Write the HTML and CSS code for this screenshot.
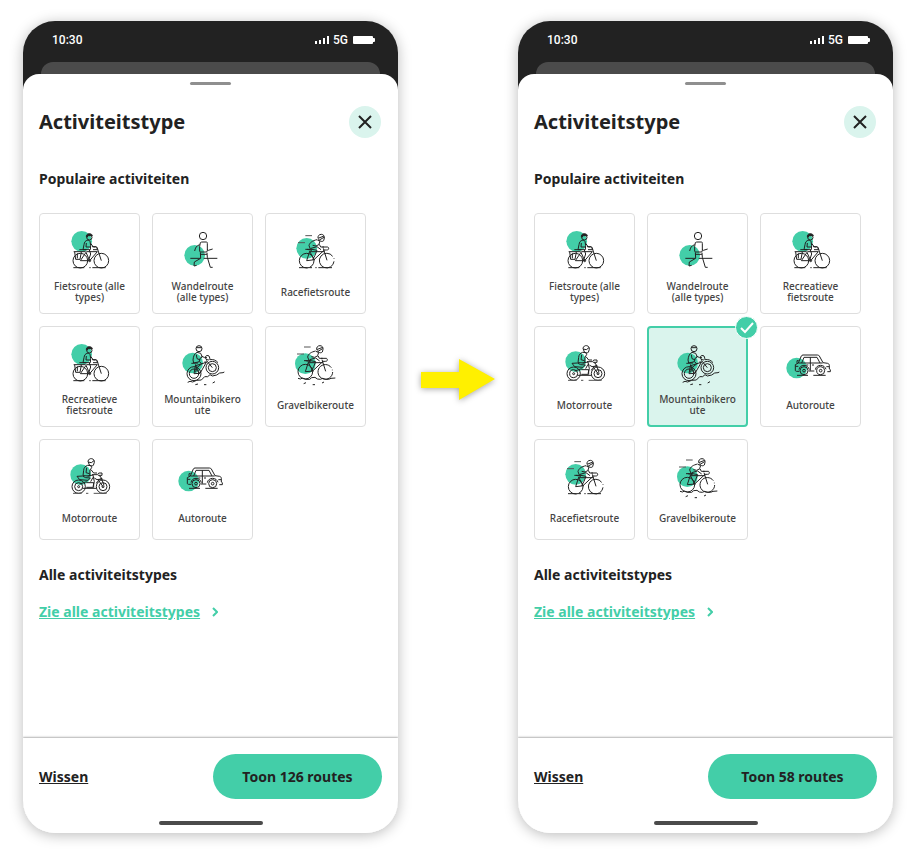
FILE: index.html
```html
<!DOCTYPE html>
<html lang="nl">
<head>
<meta charset="utf-8">
<meta name="viewport" content="width=device-width, initial-scale=1">
<title>Activiteitstype</title>
<link rel="stylesheet" href="styles.css">
</head>
<body>
<svg class="sprite" aria-hidden="true">
  <symbol id="fiets" viewBox="90 60 150 150">
    <circle class="dot" cx="140" cy="100" r="31"/>
    <circle cx="163" cy="88" r="8"/>
    <path class="solid" d="M154 85c0-5 4-8 9-8s9 3 9 6l-13 0-3 5z"/>
    <path d="M158 97c-7 0-10 6-11 13l-3 15h22l1-12-2-13c-1-2-3-3-7-3zM154 105l-1 12 14 0M167 106l8 11h7M133 125h21M163 126l4 12-6 18"/>
    <path d="M116 131h36M119 132l3 22h13l4-22M127 136v15"/>
    <circle cx="136" cy="158" r="22"/><circle cx="199" cy="158" r="22"/>
    <path d="M136 158l17-25 11 25zM164 158l23-27-33 0M171 116h13l4 9h-14M186 118l13 40"/>
    <circle cx="164" cy="158" r="3"/>
    <path d="M115 179h33M163 179h4M172 179h40"/>
  </symbol>
  <symbol id="wandel" viewBox="90 60 150 150">
    <circle class="dot" cx="140" cy="142" r="31"/>
    <circle cx="165" cy="84" r="11"/>
    <path d="M157 104c2-2 5-2 8-2h10c3 0 3 2 3 5v22c0 2-2 3-4 3h-16c-2 0-3-1-3-3v-14zM155 110c-10 3-13 10-15 19M178 124l3 3 13-4M157 133l1 18-19 11-1 12 8-2M177 134l1 14 9 30h7M157 139h20M127 151h30M167 151h41"/>
  </symbol>
  <symbol id="race" viewBox="90 60 150 150">
    <circle class="dot" cx="137" cy="121" r="31"/>
    <path class="grey" d="M133 83h20M111 104h21"/>
    <path d="M171 91c-1-7 3-12 10-12 6 0 10 5 9 11l-2 8c-3 3-8 3-11 0l-5-4M171 91l18-7M175 96l14-8M169 96l8 4-3 8M168 95c-13 3-22 8-24 18l4 10 20 4M155 112l10 2 10-5 4 8h10M150 121l18-5 12 9M168 127l-6 15-7 13"/>
    <path d="M133 124h19M138 124l15 3M184 117h15c3 0 4 2 4 5s-3 4-6 4h-9"/>
    <circle cx="137" cy="158" r="22"/><path d="M215 145a22 22 0 1 0 4 15M219 151v2"/>
    <path d="M137 158l9-28M137 158l25-3M146 130l13 25 30-28M146 131h44M187 121l11 36"/>
    <path d="M114 179h26M145 179h8M163 179h4M172 179h41"/>
  </symbol>
  <symbol id="mtb" viewBox="90 60 150 150">
    <circle class="dot" cx="134" cy="126" r="31"/>
    <circle cx="153" cy="83" r="9"/><path d="M145 80h16"/>
    <path d="M147 94c-7 3-11 11-12 23l2 9 18-4M147 94l11 3 5 11-6 3-4 11M145 101l2 12 10 4M160 105l10 5h7M155 122l6 7-16 12-2 13M130 127l20-1"/>
    <circle cx="138" cy="158" r="21"/><circle cx="138" cy="158" r="14"/>
    <circle cx="193" cy="140" r="19"/><circle cx="193" cy="140" r="12"/>
    <path d="M138 158l5-28M138 158l18-1 19-33-32 10 12 23M175 118l18 22M169 123l8 0M174 115l-2-8c1-3 8-5 11-2l3 8-5 4zM186 116c10-2 18 2 24 9"/>
    <path d="M119 184l7-3 8 2 12-5 14-1 10-10 9 0 7-6 7 4 13-3 9-6 10-1 4-2M142 191l8-2M168 191h7M194 186l7-4"/>
  </symbol>
  <symbol id="gravel" viewBox="90 60 150 150">
    <circle class="dot" cx="133" cy="128" r="31"/>
    <path class="grey" d="M129 78h20M108 99h21"/>
    <path d="M167 86c-1-7 3-12 10-12 6 0 10 5 9 11l-2 8c-3 3-8 3-11 0l-5-4M167 86l18-7M171 91l14-8M165 91l8 4-3 8M164 90c-13 3-22 8-24 18l4 10 20 4M151 107l10 2 10-5 4 8h10M146 116l18-5 12 9M164 122l-6 15-7 13"/>
    <path d="M129 119h19M134 119l15 3M180 112h15c3 0 4 2 4 5s-3 4-6 4h-9"/>
    <circle cx="133" cy="152" r="22"/><path d="M211 140a22 22 0 1 0 4 13M214 146v2"/>
    <path d="M133 152l9-28M133 152l25-2M142 124l13 26 30-28M142 125h44M183 116l11 35"/>
    <path d="M111 172l8 2 5-3 11 4h11l6-5 10-1 7 5 9 1 7-3 9 3h9l7-3 13-1M128 188l7-3M155 191h7M183 186l6-3"/>
  </symbol>
  <symbol id="motor" viewBox="90 60 150 150">
    <circle class="dot" cx="137" cy="122" r="31"/>
    <path d="M159 82c1-6 6-9 11-8 6 1 9 6 8 11l-3 9c-4 3-9 1-12-1zM159 84l10 2 8-6M158 94c-7 2-12 8-12 15l-2 16 20 1 1-18 5-7-2-6zM155 101l-2 15 10 3M168 107l8 10h10M174 130l-7 13M158 126l16-3 4 20-4 15"/>
    <path d="M126 127l16-1 10 5 14 1-7 7-25-2zM171 122h17l10 7v6l-12 2-8-5M188 120l4-3h9v7h-9M199 132l8 22"/>
    <circle cx="131" cy="158" r="20"/><circle cx="131" cy="158" r="12"/><circle cx="131" cy="158" r="3"/>
    <circle cx="204" cy="158" r="20"/><circle cx="204" cy="158" r="12"/><circle cx="204" cy="158" r="3"/>
    <path d="M154 146h22v14h-22M142 163h42M134 150l21-7M189 137l15 21M184 148c3-8 10-13 19-13"/>
    <path class="grey" d="M114 178h26M153 178h7M176 178h39"/>
  </symbol>
  <symbol id="auto" viewBox="90 60 150 150">
    <circle class="dot" cx="122" cy="141" r="31"/>
    <path d="M127 126l9-21c1-2 3-3 5-3h43c3 0 5 1 6 3l11 20 14 2c3 1 5 3 5 6v11l3 2v6h-9M175 150h-17M130 151h-8c-3 0-4-1-4-4v-16l9-5h73M137 126l7-17h39l9 17M163 109v40M168 132h6M151 132h6M119 136h8M219 137h-8M128 119h-5v8"/>
    <path d="M129 146c1-8 7-13 15-13s14 5 16 13M178 146c1-8 8-13 16-13s14 5 16 12"/>
    <circle cx="144" cy="149" r="12"/><circle cx="144" cy="149" r="4"/>
    <circle cx="194" cy="149" r="12"/><circle cx="194" cy="149" r="4"/>
    <path d="M123 163h33M172 163h37"/>
  </symbol>
  <symbol id="status" viewBox="0 0 16 8">
    <path class="fill" d="M0 5h2v3H0zM4 4h2v4H4zM8 2h2v6H8zM12 0h2v8h-2z"/>
  </symbol>
  <symbol id="battery" viewBox="0 0 22 8">
    <path class="fill" d="M1 0h18a1 1 0 0 1 1 1v1h1a1 1 0 0 1 1 1v2a1 1 0 0 1-1 1h-1v1a1 1 0 0 1-1 1H1a1 1 0 0 1-1-1V1a1 1 0 0 1 1-1z"/>
  </symbol>
  <symbol id="close" viewBox="0 0 14 14"><path d="M1 1l12 12M13 1L1 13"/></symbol>
  <symbol id="chevron" viewBox="0 0 6 10"><path d="M1 1l4 4-4 4"/></symbol>
  <symbol id="check" viewBox="0 0 14 12"><path d="M1 6l4 4 8-9"/></symbol>
</svg>

<main class="flow">
  <section class="phone" aria-label="Zonder selectie">
    <div class="status">
      <span>10:30</span>
      <span class="status-right"><svg class="signal"><use href="#status"/></svg>5G<svg class="battery"><use href="#battery"/></svg></span>
    </div>
    <div class="back-sheet"></div>
    <div class="sheet">
      <div class="handle"></div>
      <header class="head">
        <h1>Activiteitstype</h1>
        <button class="close" type="button" aria-label="Sluiten"><svg><use href="#close"/></svg></button>
      </header>
      <div class="body">
        <h2>Populaire activiteiten</h2>
        <div class="tiles">
          <button class="tile" type="button"><svg class="icon"><use href="#fiets"/></svg><span>Fietsroute (alle types)</span></button>
          <button class="tile" type="button"><svg class="icon"><use href="#wandel"/></svg><span>Wandelroute (alle types)</span></button>
          <button class="tile" type="button"><svg class="icon"><use href="#race"/></svg><span>Racefietsroute</span></button>
          <button class="tile" type="button"><svg class="icon"><use href="#fiets"/></svg><span>Recreatieve fietsroute</span></button>
          <button class="tile" type="button"><svg class="icon"><use href="#mtb"/></svg><span>Mountainbikeroute</span></button>
          <button class="tile" type="button"><svg class="icon"><use href="#gravel"/></svg><span>Gravelbikeroute</span></button>
          <button class="tile" type="button"><svg class="icon"><use href="#motor"/></svg><span>Motorroute</span></button>
          <button class="tile" type="button"><svg class="icon"><use href="#auto"/></svg><span>Autoroute</span></button>
        </div>
        <h2>Alle activiteitstypes</h2>
        <a class="all" href="#"><span>Zie alle activiteitstypes</span><svg><use href="#chevron"/></svg></a>
      </div>
      <footer class="foot">
        <div class="actions">
          <button class="clear" type="button">Wissen</button>
          <button class="show" type="button">Toon 126 routes</button>
        </div>
        <div class="home"></div>
      </footer>
    </div>
  </section>

  <svg class="arrow" viewBox="0 0 74 41" aria-hidden="true"><path d="M0 13h38V0l36 20-36 21V29H0z"/></svg>

  <section class="phone" aria-label="Met selectie">
    <div class="status">
      <span>10:30</span>
      <span class="status-right"><svg class="signal"><use href="#status"/></svg>5G<svg class="battery"><use href="#battery"/></svg></span>
    </div>
    <div class="back-sheet"></div>
    <div class="sheet">
      <div class="handle"></div>
      <header class="head">
        <h1>Activiteitstype</h1>
        <button class="close" type="button" aria-label="Sluiten"><svg><use href="#close"/></svg></button>
      </header>
      <div class="body">
        <h2>Populaire activiteiten</h2>
        <div class="tiles">
          <button class="tile" type="button"><svg class="icon"><use href="#fiets"/></svg><span>Fietsroute (alle types)</span></button>
          <button class="tile" type="button"><svg class="icon"><use href="#wandel"/></svg><span>Wandelroute (alle types)</span></button>
          <button class="tile" type="button"><svg class="icon"><use href="#fiets"/></svg><span>Recreatieve fietsroute</span></button>
          <button class="tile" type="button"><svg class="icon"><use href="#motor"/></svg><span>Motorroute</span></button>
          <button class="tile selected" type="button" aria-pressed="true"><svg class="icon"><use href="#mtb"/></svg><span>Mountainbikeroute</span><i class="badge"><svg><use href="#check"/></svg></i></button>
          <button class="tile" type="button"><svg class="icon"><use href="#auto"/></svg><span>Autoroute</span></button>
          <button class="tile" type="button"><svg class="icon"><use href="#race"/></svg><span>Racefietsroute</span></button>
          <button class="tile" type="button"><svg class="icon"><use href="#gravel"/></svg><span>Gravelbikeroute</span></button>
        </div>
        <h2>Alle activiteitstypes</h2>
        <a class="all" href="#"><span>Zie alle activiteitstypes</span><svg><use href="#chevron"/></svg></a>
      </div>
      <footer class="foot">
        <div class="actions">
          <button class="clear" type="button">Wissen</button>
          <button class="show" type="button">Toon 58 routes</button>
        </div>
        <div class="home"></div>
      </footer>
    </div>
  </section>
</main>
</body>
</html>
```
FILE: styles.css
```css
:root {
  --green: #43cea8;
  --mint: #daf4ed;
  --ink: #222;
}

* { box-sizing: border-box; }

body {
  margin: 0;
  background: #fff;
  color: var(--ink);
  font-family: "Noto Sans", "Open Sans", sans-serif;
}

button {
  margin: 0;
  padding: 0;
  border: 0;
  background: none;
  color: inherit;
  font: inherit;
  cursor: pointer;
}

h1, h2 { margin: 0; font-weight: 700; }

svg {
  display: block;
  flex: none;
  fill: none;
  stroke: currentColor;
}

.sprite { position: absolute; width: 0; height: 0; }
.fill { fill: currentColor; stroke: none; }
.dot { fill: var(--green); stroke: none; }
.solid { fill: var(--ink); }
.grey { stroke: #555; }

.flow {
  display: grid;
  grid-template-columns: minmax(0, 1fr) 120px minmax(0, 1fr);
  max-width: 1100px;
  margin: 0 auto;
  padding: 21px 21px 21px 23px;
}

.phone {
  display: flex;
  flex-direction: column;
  min-height: 812px;
  border-radius: 32px;
  background: linear-gradient(var(--ink) 100px, #fff 100px);
  box-shadow: 0 2px 14px rgba(0, 0, 0, .27);
  overflow: hidden;
}

.status {
  display: flex;
  justify-content: space-between;
  padding: 10px 23px 13px 29px;
  color: #fff;
  font: 500 12px/18px Roboto, sans-serif;
}

.status-right { display: flex; align-items: center; gap: 2px; }
.signal { width: 16px; height: 8px; }
.battery { width: 22px; height: 8px; margin-left: 3px; }

.back-sheet {
  height: 12px;
  margin: 0 18px;
  border-radius: 12px 12px 0 0;
  background: #4b4b4b;
}

.sheet {
  display: flex;
  flex: 1;
  flex-direction: column;
  border-radius: 16px 16px 0 0;
  background: #fff;
}

.handle {
  width: 41px;
  height: 3px;
  margin: 8px auto 0;
  border-radius: 2px;
  background: #8f8f8f;
}

.head {
  display: flex;
  align-items: center;
  justify-content: space-between;
  padding: 21px 17px 0 16px;
}

h1 { font-size: 20px; line-height: 32px; }

.close {
  display: grid;
  place-items: center;
  width: 32px;
  height: 32px;
  border-radius: 50%;
  background: var(--mint);
}

.close svg { width: 14px; height: 14px; stroke-width: 2; }

.body { flex: 1; padding: 31px 16px 32px; }

h2 { font-size: 14px; line-height: 20px; }

.tiles {
  display: grid;
  grid-template-columns: repeat(3, 101px);
  gap: 12px;
  margin: 24px 0 25px;
}

.tile {
  position: relative;
  display: flex;
  flex-direction: column;
  align-items: center;
  height: 101px;
  padding: 14px 10px 0;
  border: 1px solid #dedede;
  border-radius: 4px;
  color: #444;
  font-size: 10px;
  font-weight: 500;
  line-height: 11px;
}

.icon {
  width: 50px;
  height: 50px;
  color: var(--ink);
  stroke-width: 3;
  stroke-linejoin: round;
}

.tile span {
  display: grid;
  align-content: center;
  max-width: 100%;
  min-height: 28px;
  overflow-wrap: anywhere;
}

.selected {
  padding: 13px 9px 0;
  border: 2px solid var(--green);
  background: var(--mint);
}

.badge {
  position: absolute;
  top: -12px;
  right: -12px;
  display: grid;
  place-items: center;
  width: 23px;
  height: 23px;
  border: 1px solid #fff;
  border-radius: 50%;
  background: var(--green);
  color: #fff;
}

.badge svg { width: 14px; height: 12px; stroke-width: 2; }

.all {
  display: inline-flex;
  align-items: center;
  gap: 12px;
  margin-top: 17px;
  color: var(--green);
  font-size: 14px;
  font-weight: 700;
  line-height: 20px;
  text-decoration: none;
}

.all span, .clear { text-decoration: underline; }
.all svg { width: 6px; height: 10px; stroke-width: 2; }

.foot {
  padding: 16px 16px 8px;
  box-shadow: 0 -1px 2px rgba(0, 0, 0, .3);
  border-radius: 0 0 32px 32px;
}

.actions { display: flex; align-items: center; justify-content: space-between; }

.clear { font-size: 14px; font-weight: 700; line-height: 20px; }

.show {
  width: 169px;
  height: 45px;
  border-radius: 24px;
  background: var(--green);
  font-size: 14px;
  font-weight: 700;
}

.home {
  width: 104px;
  height: 4px;
  margin: 22px auto 0;
  border-radius: 2px;
  background: #4b4b4b;
}

.arrow {
  width: 74px;
  height: 41px;
  margin: 338px auto 0;
  fill: #fff000;
  stroke: none;
  filter: drop-shadow(0 1px 3px rgba(0, 0, 0, .35));
}
```
